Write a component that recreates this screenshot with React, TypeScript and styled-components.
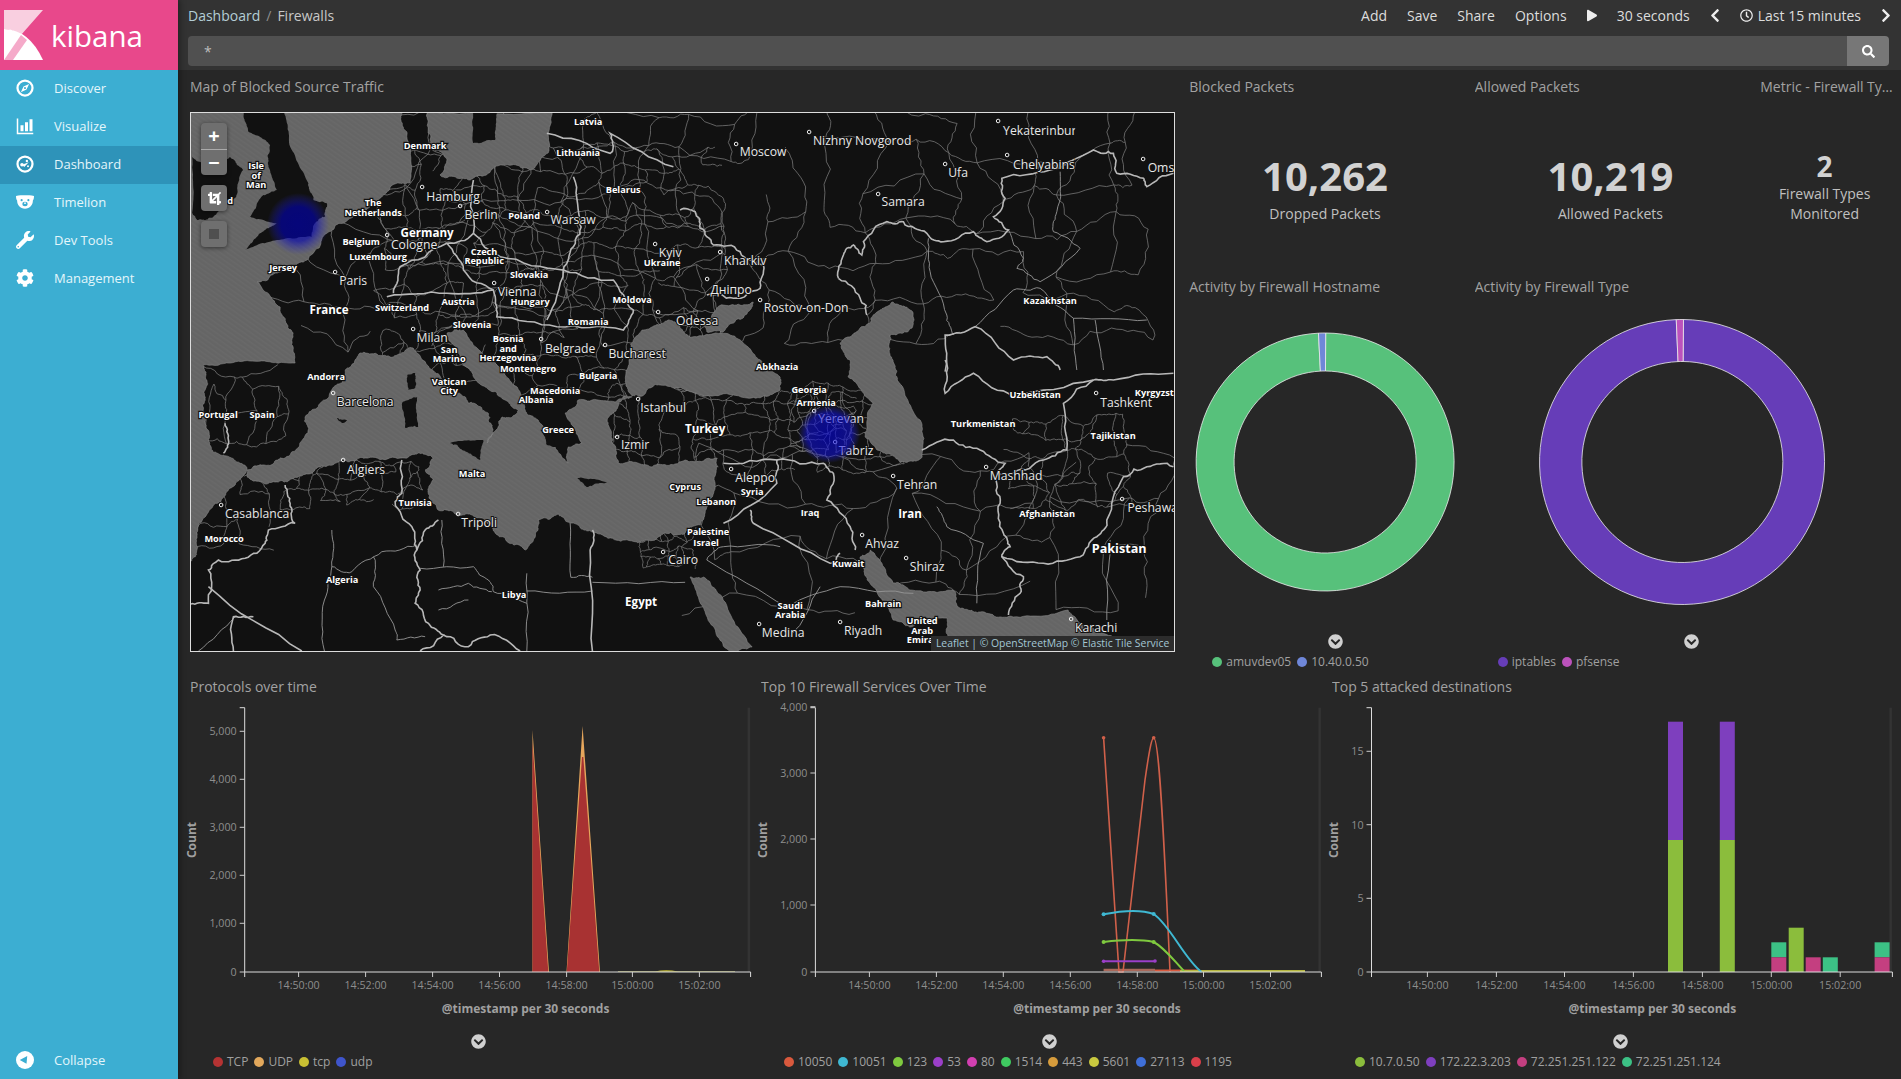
import React from "react";
import styled, { createGlobalStyle } from "styled-components";
import {
  FaChevronCircleDown,
  FaChevronLeft,
  FaChevronRight,
  FaCog,
  FaCrop,
  FaPlay,
  FaRegClock,
  FaSearch,
  FaWrench,
} from "react-icons/fa";

const GlobalStyle = createGlobalStyle`
  html, body {
    margin: 0;
    height: 100%;
    background: #272727;
    overflow: hidden;
  }
  body {
    font-family: "Open Sans", "Liberation Sans", sans-serif;
  }
`;

// layout
const Page = styled.div`
  display: flex;
  width: 1901px;
  height: 1079px;
  overflow: hidden;
`;

const Sidebar = styled.nav`
  display: flex;
  flex-direction: column;
  flex: 0 0 178px;
  background: #3caed2;
  box-shadow: 2px 0 6px rgba(0, 0, 0, 0.35);
  z-index: 2;
`;

const Logo = styled.div`
  display: flex;
  align-items: center;
  gap: 7px;
  height: 70px;
  padding-left: 4px;
  background: #e8488b;
  color: #fff;
  font-size: 29.5px;
  box-sizing: border-box;
`;

const NavItem = styled.div<{ $active?: boolean; $bottom?: boolean }>`
  display: flex;
  align-items: center;
  gap: 20px;
  height: 38px;
  padding: 0 0 ${(p) => (p.$bottom ? "0" : "2px")} 16px;
  box-sizing: border-box;
  margin-top: ${(p) => (p.$bottom ? "auto" : "0")};
  background: ${(p) => (p.$active ? "#2e93b9" : "transparent")};
  color: #e4f6fb;
  font-size: 13px;
  svg {
    flex: 0 0 18px;
    width: 18px;
    height: 18px;
    color: #fff;
  }
`;

const Main = styled.main`
  display: flex;
  flex-direction: column;
  flex: 1;
  min-width: 0;
`;

const TopBar = styled.header`
  display: flex;
  flex-direction: column;
  height: 70px;
  padding: 0 12px 0 10px;
  background: #333;
  box-sizing: border-box;
`;

const TopRow = styled.div`
  display: flex;
  align-items: center;
  justify-content: space-between;
  height: 32px;
  padding-bottom: 2px;
  box-sizing: border-box;
  margin-bottom: 4px;
  font-size: 14px;
  color: #ddd;
`;

const Crumbs = styled.div`
  display: flex;
  gap: 6px;
  color: #c8c8c8;
`;

const CrumbLink = styled.span`
  color: #b4ced6;
`;

const CrumbSep = styled.span`
  color: #8f8f8f;
`;

const Menu = styled.div`
  display: flex;
  align-items: center;
  gap: 20px;
  margin-right: -2px;
  svg {
    display: block;
    width: 10px;
    height: 15px;
    color: #eee;
  }
`;

const TimeRange = styled.span`
  display: flex;
  align-items: center;
  gap: 5px;
  svg {
    width: 13px;
    height: 13px;
  }
`;

const SearchBar = styled.form`
  display: flex;
  height: 30px;
  margin: 0;
`;

const SearchInput = styled.input`
  flex: 1;
  min-width: 0;
  padding: 0 0 0 16px;
  border: 0;
  border-radius: 4px 0 0 4px;
  background: #505050;
  color: #bdbdbd;
  font: 14px "Open Sans", sans-serif;
  outline: none;
`;

const SearchButton = styled.button`
  display: flex;
  align-items: center;
  justify-content: center;
  width: 42px;
  padding: 0;
  border: 0;
  border-radius: 0 4px 4px 0;
  background: #777;
  color: #fff;
  font-size: 13px;
`;

const Grid = styled.div`
  display: grid;
  flex: 1;
  grid-template-columns: repeat(12, 1fr);
  grid-template-rows: 200px 400px 1fr;
  padding: 0 2px 0 8px;
  min-height: 0;
`;

const Panel = styled.section<{ $col: string; $row: string }>`
  display: flex;
  flex-direction: column;
  grid-column: ${(p) => p.$col};
  grid-row: ${(p) => p.$row};
  min-width: 0;
  padding: 0 10px 0 4px;
`;

const PanelTitle = styled.h2`
  flex: 0 0 34px;
  margin: 0 -4px 0 0;
  color: #a2a2a2;
  font-size: 14px;
  font-weight: 400;
  line-height: 34px;
  white-space: nowrap;
  overflow: hidden;
  text-overflow: ellipsis;
`;

const Metric = styled.div`
  display: flex;
  flex: 1;
  flex-direction: column;
  justify-content: flex-end;
  align-items: center;
  padding-bottom: 46px;
  text-align: center;
`;

const MetricValue = styled.div<{ $small?: boolean }>`
  color: #d2d2d2;
  font-size: ${(p) => (p.$small ? "28px" : "40px")};
  font-weight: 700;
  line-height: ${(p) => (p.$small ? "36px" : "50px")};
  margin-bottom: ${(p) => (p.$small ? "0" : "3px")};
`;

const MetricLabel = styled.div`
  color: #c0c0c0;
  font-size: 14px;
  line-height: 20px;
`;

const ChartSvg = styled.svg`
  display: block;
  flex: 0 0 330px;
  height: 330px;
  overflow: visible;
`;

const ChevronRow = styled.div`
  display: flex;
  justify-content: center;
  height: 14px;
  padding-left: 20px;
  color: #d0d0d0;
  font-size: 15px;
  line-height: 14px;
`;

const Legend = styled.ul`
  display: flex;
  gap: 6px;
  margin: 5px 0 0;
  padding: 0 0 0 23px;
  list-style: none;
`;

const LegendItem = styled.li`
  display: flex;
  align-items: center;
  gap: 4px;
  color: #a0a0a0;
  font-size: 12px;
  line-height: 18px;
`;

const LegendDot = styled.span<{ $color: string }>`
  width: 10px;
  height: 10px;
  border-radius: 50%;
  background: ${(p) => p.$color};
`;

// map
const MapFrame = styled.div`
  position: relative;
  height: 540px;
  margin-top: 8px;
  border: 1px solid #ddd;
  box-sizing: border-box;
  overflow: hidden;
  background: #111;
`;

const MapSvg = styled.svg`
  display: block;
  width: 100%;
  height: 100%;
`;

const MapControls = styled.div`
  position: absolute;
  top: 10px;
  left: 10px;
  display: flex;
  flex-direction: column;
  gap: 10px;
`;

const ControlGroup = styled.div`
  display: flex;
  flex-direction: column;
  width: 26px;
  border-radius: 4px;
  background: #6f6f6f;
  box-shadow: 0 1px 4px rgba(0, 0, 0, 0.5);
  overflow: hidden;
`;

const ControlButton = styled.div<{ $divider?: boolean }>`
  display: flex;
  align-items: center;
  justify-content: center;
  height: 26px;
  box-sizing: border-box;
  color: #fff;
  font-size: 20px;
  font-weight: 700;
  line-height: 1;
  border-top: ${(p) => (p.$divider ? "1px solid #aaa" : "0")};
  svg {
    width: 13px;
    height: 13px;
  }
`;

const StopSquare = styled.span`
  width: 10px;
  height: 10px;
  background: #4f4f4f;
`;

const Attribution = styled.div`
  position: absolute;
  right: 0;
  bottom: 0;
  padding: 0 5px;
  background: #2c2c2c;
  color: #a3c7d4;
  font-size: 10.4px;
  line-height: 15px;
  white-space: nowrap;
`;

const CityLabel = styled.text`
  fill: #e8e8e8;
  font-size: 12.2px;
  text-anchor: middle;
  paint-order: stroke;
  stroke: #111;
  stroke-width: 2px;
`;

const CountryLabel = styled.text<{ $size?: number }>`
  fill: #fff;
  font-size: ${(p) => p.$size ?? 9.2}px;
  font-weight: 700;
  text-anchor: middle;
  paint-order: stroke;
  stroke: #111;
  stroke-width: 2.4px;
`;

const TickText = styled.text<{ $anchor: string }>`
  fill: #8e8e8e;
  font-size: 10.7px;
  text-anchor: ${(p) => p.$anchor};
`;

const AxisTitle = styled.text`
  fill: #a0a0a0;
  font-size: 12px;
  font-weight: 700;
  text-anchor: middle;
`;

// map data, written in the pixel coordinates of the page
type Pt = [number, number];

const P = (ox: number, oy: number, s: string): Pt[] =>
  s.split(" ").map((v) => {
    const [x, y] = v.split(",").map(Number);
    return [ox + x / 3, oy + y / 3] as Pt;
  });
const A = (s: string) => P(0, 0, s.split(" ").map((v) => v.split(",").map((n) => Number(n) * 3).join(",")).join(" "));

let seed = 7;
const rnd = () => {
  seed = (seed * 16807) % 2147483647;
  return seed / 2147483647;
};

const rough = (pts: Pt[], amp: number, closed = false, passes = 3) => {
  let cur = closed ? [...pts, pts[0]] : pts;
  for (let pass = 0; pass < passes; pass++) {
    const next: Pt[] = [cur[0]];
    for (let i = 1; i < cur.length; i++) {
      const [ax, ay] = cur[i - 1];
      const [bx, by] = cur[i];
      const len = Math.hypot(bx - ax, by - ay);
      const off = (rnd() - 0.5) * Math.min(amp, len * 0.35);
      next.push([(ax + bx) / 2 + ((by - ay) / (len || 1)) * off, (ay + by) / 2 - ((bx - ax) / (len || 1)) * off]);
      next.push(cur[i]);
    }
    cur = next;
    amp *= 0.6;
  }
  return "M" + cur.map(([x, y]) => `${x.toFixed(1)} ${y.toFixed(1)}`).join("L") + (closed ? "Z" : "");
};

const mesh = (x0: number, y0: number, x1: number, y1: number, step: number) => {
  const nodes: Pt[][] = [];
  for (let y = y0; y <= y1; y += step) {
    const row: Pt[] = [];
    for (let x = x0; x <= x1; x += step) row.push([x + (rnd() - 0.5) * step * 0.8, y + (rnd() - 0.5) * step * 0.8]);
    nodes.push(row);
  }
  let d = "";
  nodes.forEach((row, j) =>
    row.forEach((n, i) => {
      if (row[i + 1] && rnd() < 0.8) d += rough([n, row[i + 1]], step * 0.3);
      if (nodes[j + 1] && rnd() < 0.8) d += rough([n, nodes[j + 1][i]], step * 0.3);
    }),
  );
  return d;
};

const meshFine = [
  mesh(190, 112, 1175, 340, 38),
  mesh(380, 150, 720, 400, 20),
  mesh(610, 385, 900, 470, 17),
  mesh(280, 462, 430, 505, 14),
  mesh(200, 478, 285, 560, 22),
  mesh(700, 460, 1175, 640, 46),
  mesh(790, 395, 860, 450, 9),
  mesh(1010, 420, 1130, 505, 17),
  mesh(640, 530, 695, 570, 9),
  mesh(205, 370, 300, 450, 22),
].join("");

const seas = [
  A("190,112 402,112 407,133 410,183 397,183 377,200 343,223 327,233 307,260 277,273 257,282 280,307 293,333 295,363 250,361 203,365 206,372 205,390 203,410 206,425 208,440 213,452 223,455 247,468 245,474 235,485 218,503 205,517 197,537 195,557 190,562"),
  A("428,112 552,112 548,153 530,170 500,165 470,180 440,175 447,160 433,150 428,133"),
  A("247,470 262,465 285,458 298,448 308,433 305,417 325,400 342,383 345,370 360,353 390,357 413,348 432,370 452,390 468,403 488,413 493,430 487,443 498,427 502,417 515,415 518,410 505,400 485,387 472,373 460,355 447,333 463,330 490,360 517,387 525,410 538,420 555,447 568,463 568,447 582,443 565,413 578,400 615,402 632,397 618,403 607,420 612,443 618,463 652,467 685,460 717,458 716,470 710,500 700,525 685,533 665,533 645,540 625,540 592,532 572,523 558,514 538,520 535,537 525,550 505,538 495,533 482,518 462,515 438,510 428,493 433,480 425,470 433,458 418,453 405,458 365,458 342,460 318,467 298,477 275,482 247,477"),
  A("632,396 625,382 630,350 642,330 668,320 680,328 692,337 730,335 757,358 780,377 780,390 747,398 700,395 660,385 640,396"),
  A("705,322 723,305 753,302 743,318 723,332 707,332"),
  A("877,312 893,302 913,313 912,328 890,335 893,362 897,380 920,420 922,457 900,462 877,450 865,437 873,403 848,377 850,360 840,343 860,328"),
  A("690,577 703,577 723,600 752,647 730,652 710,623"),
  A("860,557 870,550 893,583 910,590 953,590 958,607 980,612 1013,617 1068,610 1077,620 1113,637 1020,640 950,640 947,618 910,627 893,620 867,580"),
];

const lands = [
  P(180, 100, "190,36 312,36 330,140 385,250 400,300 440,310 435,350 405,370 395,410 290,420 195,450 240,400 290,370 210,350 250,285 290,270 265,200 270,135 205,95"),
  A("192,157 213,167 230,157 243,170 236,197 213,217 197,220 192,213"),
  A("473,112 497,112 495,140 473,143"),
  A("450,443 483,440 480,460 462,450"),
  A("402,403 417,397 418,427 405,428"),
  A("407,375 415,373 415,388 408,390"),
  A("577,478 607,483 588,487"),
  A("337,418 347,420 342,423"),
  A("540,430 551,428 556,447 547,445"),
];

const majorBorders = [
  P(680, 105, "475,520 490,450 520,420 545,450 550,410 620,350 670,350 740,385 790,410 880,380 920,410 985,375 940,335 975,280 965,220 1110,195 1240,135 1300,145 1310,205 1390,220 1400,245 1480,205"),
  P(680, 105, "0,315 45,320 60,370 100,420 180,440 250,480 240,550 160,580 80,570"),
  P(680, 105, "475,520 540,580 560,630"),
  P(680, 105, "795,800 795,690 885,665 1000,765 1100,755 1140,795"),
  P(180, 100, "880,240 880,400 800,430 850,510 940,570 950,650 1130,680 1330,690 1360,630 1300,540 1150,510 1100,660"),
  P(180, 100, "1100,100 1290,160 1290,100 1480,200"),
  P(180, 100, "1180,230 1200,360 1180,440 1150,510 960,470 880,400"),
  P(180, 100, "620,590 800,580 940,570"),
  P(180, 100, "640,580 660,500 800,430"),
  P(185, 370, "300,345 315,400 330,460 250,480 240,520 180,565 100,570 70,600 70,700 15,703"),
  P(185, 370, "70,650 350,843"),
  P(185, 370, "145,843 145,740 205,740"),
  P(185, 370, "650,270 650,370 630,395 680,470 695,540 705,600 705,660 690,700 730,760 775,795 705,843"),
  P(185, 370, "775,795 850,830 915,795 1005,843"),
  P(185, 370, "695,540 720,480 760,450"),
  P(185, 370, "1222,480 1215,540 1222,843"),
  P(185, 370, "120,160 130,210 115,250"),
  P(680, 360, "130,490 290,370 290,300 130,310"),
  P(680, 360, "290,300 430,310 460,340 440,420 510,500 525,570"),
  P(680, 360, "210,450 220,490 450,610 480,580"),
  P(680, 360, "725,270 820,240 900,270 975,310 950,350 960,430 970,520 990,560 965,590 1030,650 1020,700 985,765"),
  P(680, 360, "965,590 1090,610 1200,590 1250,530 1280,480 1330,350 1400,320 1480,320"),
  P(680, 360, "795,0 795,100 880,40 1000,110 1240,60 1300,60 1480,40"),
  P(680, 360, "1240,60 1150,130 1160,270 1090,300 1000,340 950,350"),
];

const minorBorders = [
  P(185, 370, "440,480 440,590 418,690 418,843"),
  P(185, 370, "440,590 500,605 590,545 695,525"),
  P(185, 370, "565,560 565,650 630,780 635,810 720,800"),
  P(185, 370, "705,595 865,590 910,630 925,665 1025,700"),
  P(185, 370, "770,450 775,590"),
  P(185, 370, "150,740 40,843"),
  P(185, 370, "1025,610 1025,843"),
  P(185, 370, "1025,663 1222,663"),
  P(185, 370, "1222,637 1500,637"),
  P(185, 370, "1155,460 1157,622 1222,622"),
  P(185, 370, "760,660 850,640 920,665"),
  P(185, 370, "760,720 850,690"),
  P(680, 105, "885,665 1000,555 1080,550 1180,640 1400,645"),
  P(680, 105, "1180,640 1190,795"),
  P(680, 105, "1245,645 1270,795"),
  P(680, 105, "745,400 750,500 800,630 820,690"),
  P(680, 105, "985,375 1030,460 1010,490 1080,530"),
  P(680, 105, "1140,200 1130,320 1120,380 1200,430 1080,530"),
  P(680, 360, "300,560 130,560 80,600 320,740 480,680 700,700"),
  P(680, 360, "420,680 330,830"),
  P(680, 360, "770,440 800,500 910,550 890,730"),
  P(680, 360, "1290,540 1280,780"),
];

const cities: [string, number, number, number, number][] = [
  ["Hamburg", 453, 197, 422, 187],
  ["Berlin", 481, 215, 460, 206],
  ["Warsaw", 573, 220, 547, 212],
  ["Cologne", 414, 245, 387, 235],
  ["Paris", 353, 281, 335, 272],
  ["Vienna", 517, 292, 494, 283],
  ["Milan", 432, 338, 413, 329],
  ["Belgrade", 570, 349, 541, 339],
  ["Bucharest", 637, 354, 605, 345],
  ["Kyiv", 670, 253, 655, 244],
  ["Odessa", 697, 321, 658, 312],
  ["Barcelona", 365, 402, 333, 393],
  ["Istanbul", 663, 408, 638, 399],
  ["Izmir", 635, 445, 617, 437],
  ["Algiers", 366, 470, 343, 460],
  ["Casablanca", 257, 514, 221, 505],
  ["Tripoli", 479, 523, 458, 514],
  ["Cairo", 683, 560, 663, 552],
  ["Yerevan", 841, 419, 814, 411],
  ["Tabriz", 856, 451, 835, 442],
  ["Aleppo", 755, 478, 731, 469],
  ["Tehran", 917, 485, 893, 476],
  ["Mashhad", 1016, 476, 986, 467],
  ["Tashkent", 1126, 403, 1096, 393],
  ["Peshawar", 1155, 508, 1122, 499],
  ["Ahvaz", 882, 544, 862, 535],
  ["Shiraz", 927, 567, 906, 558],
  ["Medina", 783, 633, 759, 624],
  ["Riyadh", 863, 631, 840, 622],
  ["Karachi", 1096, 628, 1071, 619],
  ["Moscow", 763, 152, 736, 144],
  ["Nizhny Novgorod", 862, 141, 809, 132],
  ["Ufa", 958, 173, 945, 164],
  ["Samara", 903, 202, 878, 194],
  ["Omsk", 1164, 168, 1143, 159],
  ["Kharkiv", 745, 261, 720, 252],
  ["Дніпро", 731, 290, 707, 279],
  ["Rostov-on-Don", 806, 308, 760, 300],
];

const clippedCities: [string, number, number, number, number][] = [
  ["Yekaterinburg", 1043, 131, 998, 121],
  ["Chelyabinsk", 1047, 165, 1007, 155],
];

const countries: [string, number, number, number?][] = [
  ["Isle", 256, 165], ["of", 256, 175], ["Man", 256, 184], ["d", 230, 200],
  ["The", 373, 202], ["Netherlands", 373, 212], ["Denmark", 425, 145], ["Latvia", 588, 121],
  ["Lithuania", 578, 152], ["Belarus", 623, 189], ["Poland", 524, 215], ["Germany", 427, 233, 11.6],
  ["Belgium", 361, 241], ["Luxembourg", 378, 256], ["Czech", 484, 251], ["Republic", 484, 260],
  ["Slovakia", 529, 274], ["Hungary", 530, 301], ["Austria", 458, 301], ["Switzerland", 402, 307],
  ["Jersey", 283, 267], ["France", 329, 310, 11.6], ["Slovenia", 472, 324], ["Romania", 588, 321],
  ["Moldova", 632, 299], ["Ukraine", 662, 262], ["Bosnia", 508, 338], ["and", 508, 348],
  ["Herzegovina", 508, 357], ["Montenegro", 528, 368], ["San", 449, 349], ["Marino", 449, 358],
  ["Andorra", 326, 376], ["Bulgaria", 598, 375], ["Vatican", 449, 381], ["City", 449, 390],
  ["Macedonia", 555, 390], ["Albania", 536, 399], ["Portugal", 218, 414], ["Spain", 262, 414],
  ["Greece", 558, 429], ["Malta", 472, 473], ["Tunisia", 415, 502], ["Morocco", 224, 538],
  ["Algeria", 342, 579], ["Libya", 514, 594], ["Egypt", 641, 602, 11.6], ["Cyprus", 685, 486],
  ["Abkhazia", 777, 366], ["Georgia", 809, 389], ["Armenia", 816, 402], ["Turkey", 705, 429, 11.6],
  ["Syria", 752, 491], ["Lebanon", 716, 501], ["Palestine", 708, 531], ["Israel", 706, 542],
  ["Iraq", 810, 512], ["Iran", 910, 514, 11.6], ["Kuwait", 848, 563], ["Bahrain", 883, 603],
  ["Saudi", 790, 605], ["Arabia", 790, 614], ["United", 922, 620], ["Arab", 922, 630],
  ["Emirates", 927, 639], ["Turkmenistan", 983, 423], ["Uzbekistan", 1035, 394],
  ["Kyrgyzstan", 1160, 392], ["Tajikistan", 1113, 435], ["Afghanistan", 1047, 513],
  ["Pakistan", 1119, 549, 12.6], ["Kazakhstan", 1050, 300],
];

const seaPaths = seas.map((s) => rough(s, 6, true, 4));
const landPaths = lands.map((s) => rough(s, 3.5, true, 4));
const majorPaths = majorBorders.map((s) => rough(s, 7));
const minorPaths = minorBorders.map((s) => rough(s, 5));

const CityMark = ({ city }: { city: [string, number, number, number, number] }) => (
  <>
    <circle cx={city[3]} cy={city[4]} r={1.8} fill="none" stroke="#eee" strokeWidth={1} />
    <CityLabel x={city[1]} y={city[2] + 4}>
      {city[0]}
    </CityLabel>
  </>
);

const WorldMap = () => (
  <MapSvg viewBox="191 113 983 538">
    <defs>
      <pattern id="seaTex" width="4" height="4" patternUnits="userSpaceOnUse" patternTransform="rotate(35)">
        <rect width="4" height="4" fill="#656565" />
        <rect width="4" height="1.5" fill="#696969" />
      </pattern>
      <radialGradient id="blobUk">
        <stop offset="0" stopColor="#0000b0" stopOpacity="0.66" />
        <stop offset="0.55" stopColor="#0000b8" stopOpacity="0.6" />
        <stop offset="1" stopColor="#2a2ad8" stopOpacity="0" />
      </radialGradient>
      <radialGradient id="blobAm">
        <stop offset="0" stopColor="#0000d8" stopOpacity="0.62" />
        <stop offset="0.72" stopColor="#1010e0" stopOpacity="0.55" />
        <stop offset="1" stopColor="#2a2ad8" stopOpacity="0" />
      </radialGradient>
      <clipPath id="tileEdge">
        <rect x="190" y="112" width="885" height="100" />
      </clipPath>
    </defs>
    <rect x="190" y="112" width="985" height="540" fill="#111" />
    <path d={meshFine} fill="none" stroke="#7c7c7c" strokeWidth={0.75} />
    {seaPaths.map((d, i) => (
      <path key={i} d={d} fill="url(#seaTex)" stroke="#8a8a8a" strokeWidth={0.6} />
    ))}
    {landPaths.map((d, i) => (
      <path key={i} d={d} fill="#111" />
    ))}
    {minorPaths.map((d, i) => (
      <path key={i} d={d} fill="none" stroke="#969696" strokeWidth={0.9} />
    ))}
    {majorPaths.map((d, i) => (
      <path key={i} d={d} fill="none" stroke="#b8b8b8" strokeWidth={1.6} />
    ))}
    {countries.map(([name, x, y, size]) => (
      <CountryLabel key={name} x={x} y={y + 3.5} $size={size}>
        {name}
      </CountryLabel>
    ))}
    {cities.map((c) => (
      <CityMark key={c[0]} city={c} />
    ))}
    <g clipPath="url(#tileEdge)">
      {clippedCities.map((c) => (
        <CityMark key={c[0]} city={c} />
      ))}
    </g>
    <circle cx={298} cy={224} r={31} fill="url(#blobUk)" />
    <ellipse cx={829} cy={434} rx={31} ry={29} fill="url(#blobAm)" />
  </MapSvg>
);

// chart pieces
type AxisProps = {
  x0: number;
  x1: number;
  countX: number;
  titleX: number;
  yTicks: [string, number][];
  xTicks: number[];
  originX: number;
  children: React.ReactNode;
};

const times = ["14:50:00", "14:52:00", "14:54:00", "14:56:00", "14:58:00", "15:00:00", "15:02:00"];
const TOP = 707.7;
const BASE = 972;

const AxisChart = ({ x0, x1, countX, titleX, yTicks, xTicks, originX, children }: AxisProps) => (
  <ChartSvg viewBox={`${originX} 704 561 330`} width={561}>
    <rect x={x1 - 3} y={TOP} width={2.5} height={BASE - TOP} fill="#333" />
    {children}
    <path d={`M${x0 - 5} ${TOP}H${x0}V${BASE}H${x1}V${BASE + 5}M${x0} ${BASE}V${BASE + 5}`} fill="none" stroke="#ddd" />
    {yTicks.map(([label, y]) => (
      <g key={label}>
        <line x1={x0 - 5} x2={x0} y1={y} y2={y} stroke="#ccc" />
        <TickText x={x0 - 8} y={y + 4} $anchor="end">
          {label}
        </TickText>
      </g>
    ))}
    {xTicks.map((x, i) => (
      <g key={x}>
        <line x1={x} x2={x} y1={BASE} y2={BASE + 5} stroke="#ccc" />
        <TickText x={x} y={BASE + 17} $anchor="middle">
          {times[i]}
        </TickText>
      </g>
    ))}
    <AxisTitle transform={`translate(${countX + 4} 840) rotate(-90)`}>Count</AxisTitle>
    <AxisTitle x={titleX} y={1013}>
      @timestamp per 30 seconds
    </AxisTitle>
  </ChartSvg>
);

const arc = (cx: number, cy: number, R: number, r: number, a0: number, a1: number) => {
  const pt = (rad: number, a: number) => {
    const t = ((a - 90) * Math.PI) / 180;
    return `${(cx + rad * Math.cos(t)).toFixed(2)} ${(cy + rad * Math.sin(t)).toFixed(2)}`;
  };
  const large = a1 - a0 > 180 ? 1 : 0;
  return `M${pt(R, a0)}A${R} ${R} 0 ${large} 1 ${pt(R, a1)}L${pt(r, a1)}A${r} ${r} 0 ${large} 0 ${pt(r, a0)}Z`;
};

const Donut = ({ origin, width, cx, R, r, main, slice, from, to }: {
  origin: number; width: number; cx: number; R: number; r: number; main: string; slice: string; from: number; to: number;
}) => (
  <ChartSvg viewBox={`${origin} 304 ${width} 330`} width={width}>
    <path d={arc(cx, 462, R, r, to, 360 + from)} fill={main} stroke="#eee" strokeWidth={0.8} />
    <path d={arc(cx, 462, R, r, from, to)} fill={slice} stroke="#eee" strokeWidth={0.8} />
  </ChartSvg>
);

const LegendRow = ({ items }: { items: [string, string][] }) => (
  <Legend>
    {items.map(([name, color]) => (
      <LegendItem key={name}>
        <LegendDot $color={color} />
        {name}
      </LegendItem>
    ))}
  </Legend>
);

const Chevron = () => (
  <ChevronRow>
    <FaChevronCircleDown />
  </ChevronRow>
);

// sidebar icons
const CompassIcon = () => (
  <svg viewBox="0 0 24 24">
    <circle cx="12" cy="12" r="10" fill="none" stroke="currentColor" strokeWidth="3" />
    <path d="M17.5 6.5 14 14l-7.500 3.500L10 10zM12 10.600a1.400 1.400 0 1 0 .01 0z" fill="currentColor" fillRule="evenodd" />
  </svg>
);

const BarsIcon = () => (
  <svg viewBox="0 0 24 24">
    <path d="M1 2h2v19h20v2H1z M6 11h4v8H6z M12 7h4v12h-4z M18 3h4v16h-4z" fill="currentColor" />
  </svg>
);

const GaugeIcon = () => (
  <svg viewBox="0 0 24 24">
    <circle cx="12" cy="12" r="10" fill="none" stroke="currentColor" strokeWidth="3" />
    <circle cx="8" cy="13" r="2.400" fill="currentColor" />
    <circle cx="14.500" cy="8" r="1.600" fill="currentColor" />
    <path d="M8 13 17 9.500 11 16z" fill="currentColor" />
    <circle cx="16" cy="15" r="1.300" fill="currentColor" />
  </svg>
);

const BearIcon = () => (
  <svg viewBox="0 0 24 24">
    <path d="M0 4c4-1 8-1 12-1s8 0 12 1c0 3-.5 5-1.500 6 0 6-4 11-10.500 11S1.500 16 1.500 10C.5 9 0 7 0 4z" fill="currentColor" />
    <circle cx="7.500" cy="9.500" r="1.400" fill="#3caed2" />
    <circle cx="16.500" cy="9.500" r="1.400" fill="#3caed2" />
    <ellipse cx="12" cy="14.500" rx="3.500" ry="3" fill="#3caed2" />
    <circle cx="12" cy="13.500" r="1.200" fill="#fff" />
  </svg>
);

const CollapseIcon = () => (
  <svg viewBox="0 0 24 24">
    <circle cx="12" cy="12" r="12" fill="currentColor" />
    <path d="M5 12 15 6.500 14 17z" fill="#3caed2" />
  </svg>
);

const KibanaMark = () => (
  <svg width="40" height="50" viewBox="0 0 40 50">
    <path d="M0 0h39L17 25Q9 19.500 0 19z" fill="#f9cfe0" />
    <path d="M0 19Q25 19.500 39 50H0z" fill="#fff" />
    <path d="M0 50 17 25 23 30 9 50z" fill="#f5aac9" />
  </svg>
);

export default function App() {
  return (
    <Page>
      <GlobalStyle />
      <Sidebar>
        <Logo>
          <KibanaMark />
          kibana
        </Logo>
        <NavItem><CompassIcon />Discover</NavItem>
        <NavItem><BarsIcon />Visualize</NavItem>
        <NavItem $active><GaugeIcon />Dashboard</NavItem>
        <NavItem><BearIcon />Timelion</NavItem>
        <NavItem><FaWrench />Dev Tools</NavItem>
        <NavItem><FaCog />Management</NavItem>
        <NavItem $bottom><CollapseIcon />Collapse</NavItem>
      </Sidebar>
      <Main>
        <TopBar>
          <TopRow>
            <Crumbs>
              <CrumbLink>Dashboard</CrumbLink>
              <CrumbSep>/</CrumbSep>
              <span>Firewalls</span>
            </Crumbs>
            <Menu>
              <span>Add</span>
              <span>Save</span>
              <span>Share</span>
              <span>Options</span>
              <FaPlay />
              <span>30 seconds</span>
              <FaChevronLeft />
              <TimeRange>
                <FaRegClock />
                Last 15 minutes
              </TimeRange>
              <FaChevronRight />
            </Menu>
          </TopRow>
          <SearchBar>
            <SearchInput readOnly value="*" />
            <SearchButton type="button">
              <FaSearch />
            </SearchButton>
          </SearchBar>
        </TopBar>
        <Grid>
          <Panel $col="1 / span 7" $row="1 / span 2">
            <PanelTitle>Map of Blocked Source Traffic</PanelTitle>
            <MapFrame>
              <WorldMap />
              <MapControls>
                <ControlGroup>
                  <ControlButton>+</ControlButton>
                  <ControlButton $divider>−</ControlButton>
                </ControlGroup>
                <ControlGroup>
                  <ControlButton><FaCrop /></ControlButton>
                </ControlGroup>
                <ControlGroup>
                  <ControlButton><StopSquare /></ControlButton>
                </ControlGroup>
              </MapControls>
              <Attribution>Leaflet | © OpenStreetMap © Elastic Tile Service</Attribution>
            </MapFrame>
          </Panel>

          <Panel $col="8 / span 2" $row="1">
            <PanelTitle>Blocked Packets</PanelTitle>
            <Metric>
              <MetricValue>10,262</MetricValue>
              <MetricLabel>Dropped Packets</MetricLabel>
            </Metric>
          </Panel>
          <Panel $col="10 / span 2" $row="1">
            <PanelTitle>Allowed Packets</PanelTitle>
            <Metric>
              <MetricValue>10,219</MetricValue>
              <MetricLabel>Allowed Packets</MetricLabel>
            </Metric>
          </Panel>
          <Panel $col="12 / span 1" $row="1">
            <PanelTitle>Metric - Firewall Types</PanelTitle>
            <Metric>
              <MetricValue $small>2</MetricValue>
              <MetricLabel>Firewall Types<br />Monitored</MetricLabel>
            </Metric>
          </Panel>

          <Panel $col="8 / span 2" $row="2">
            <PanelTitle>Activity by Firewall Hostname</PanelTitle>
            <Donut origin={1189} width={272} cx={1325} R={129} r={91} main="#57c17b" slice="#6f87d8" from={-2.9} to={0.3} />
            <Chevron />
            <LegendRow items={[["amuvdev05", "#57c17b"], ["10.40.0.50", "#6f87d8"]]} />
          </Panel>
          <Panel $col="10 / span 3" $row="2">
            <PanelTitle>Activity by Firewall Type</PanelTitle>
            <Donut origin={1474.75} width={414} cx={1682} R={142.5} r={100.5} main="#663db8" slice="#bc52bc" from={-2.4} to={0.5} />
            <Chevron />
            <LegendRow items={[["iptables", "#663db8"], ["pfsense", "#bc52bc"]]} />
          </Panel>

          <Panel $col="1 / span 4" $row="3">
            <PanelTitle>Protocols over time</PanelTitle>
            <AxisChart
              originX={190}
              x0={244.7}
              x1={750.6}
              countX={192}
              titleX={525.6}
              yTicks={[["5,000", 731.3], ["4,000", 779.3], ["3,000", 827.3], ["2,000", 875.3], ["1,000", 923.3], ["0", 972]]}
              xTicks={[298.6, 365.6, 432.6, 499.5, 566.6, 632.4, 699.4]}
            >
              <path d="M532.500 972V730L549 972Z M566.500 972L582.600 726 600 972Z" fill="#e5a65c" />
              <path d="M532.500 972V742L548.300 972Z M566.800 972 582 757H583.300L599.300 972Z" fill="#a83232" />
              <path d="M618 971.500H735" stroke="#8d8d55" strokeWidth={1} />
              <path d="M655 971.500Q666 969 678 971.500Z" fill="#c9c033" />
            </AxisChart>
            <Chevron />
            <LegendRow items={[["TCP", "#b53333"], ["UDP", "#e2a85c"], ["tcp", "#c9c033"], ["udp", "#3f55cc"]]} />
          </Panel>

          <Panel $col="5 / span 4" $row="3">
            <PanelTitle>Top 10 Firewall Services Over Time</PanelTitle>
            <AxisChart
              originX={761}
              x0={815.4}
              x1={1321.4}
              countX={762.6}
              titleX={1097}
              yTicks={[["4,000", 706.7], ["3,000", 773], ["2,000", 839], ["1,000", 905], ["0", 972]]}
              xTicks={[869.4, 936.4, 1003.3, 1070.3, 1137.3, 1203.5, 1270.5]}
            >
              <path d="M1103.600 970H1155" stroke="#a8685a" strokeWidth={2.5} />
              <path d="M1155 970.500H1200" stroke="#d9593d" strokeWidth={2} />
              <path d="M1180 971H1305" stroke="#b4b53f" strokeWidth={2} />
              <path d="M1103.600 737.700 1119 972H1123L1145 780C1150 745 1152 738 1153.700 738C1158 738 1162 790 1170 972" fill="none" stroke="#d0604a" strokeWidth={1.6} />
              <path d="M1103.600 914.300C1120 911 1140 909 1153.700 914C1170 925 1185 960 1201.600 972" fill="none" stroke="#3fb8d2" strokeWidth={2} />
              <path d="M1103.600 942C1120 940 1140 939 1153.700 942C1165 948 1175 962 1184 971" fill="none" stroke="#7fc93f" strokeWidth={2} />
              <path d="M1103 961.300H1155" stroke="#9b3fc9" strokeWidth={2} />
              <circle cx={1103.6} cy={737.7} r={1.8} fill="#d0604a" />
              <circle cx={1153.7} cy={737.7} r={1.8} fill="#d0604a" />
              <circle cx={1103.6} cy={914.3} r={2} fill="#3fb8d2" />
              <circle cx={1153.7} cy={914} r={2} fill="#3fb8d2" />
              <circle cx={1103.6} cy={942} r={2} fill="#7fc93f" />
              <circle cx={1153.7} cy={942} r={2} fill="#7fc93f" />
              <circle cx={1103.6} cy={961.3} r={1.8} fill="#9b3fc9" />
              <circle cx={1155} cy={961} r={1.8} fill="#9b3fc9" />
            </AxisChart>
            <Chevron />
            <LegendRow
              items={[
                ["10050", "#d9593d"], ["10051", "#3fb8d2"], ["123", "#7fc93f"], ["53", "#9b3fc9"], ["80", "#d23fb0"],
                ["1514", "#3fca60"], ["443", "#d79c3c"], ["5601", "#c9c93f"], ["27113", "#3f6fd8"], ["1195", "#d93f4a"],
              ]}
            />
          </Panel>

          <Panel $col="9 / span 4" $row="3">
            <PanelTitle>Top 5 attacked destinations</PanelTitle>
            <AxisChart
              originX={1332}
              x0={1371.5}
              x1={1892.4}
              countX={1333.7}
              titleX={1652.3}
              yTicks={[["15", 751.3], ["10", 824.7], ["5", 898.3], ["0", 972]]}
              xTicks={[1427.4, 1496.4, 1564.5, 1633.4, 1702.4, 1771.3, 1840.2]}
            >
              <rect x={1668} y={721.7} width={15} height={118.3} fill="#7e3fbe" />
              <rect x={1668} y={840} width={15} height={132} fill="#8bbd3c" />
              <rect x={1719.8} y={721.7} width={15} height={118.3} fill="#7e3fbe" />
              <rect x={1719.8} y={840} width={15} height={132} fill="#8bbd3c" />
              <rect x={1771.3} y={942.3} width={15} height={15} fill="#3cc185" />
              <rect x={1771.3} y={957.3} width={15} height={14.7} fill="#c43f80" />
              <rect x={1788.7} y={927.7} width={15} height={44.3} fill="#8bbd3c" />
              <rect x={1805.7} y={957.3} width={15} height={14.7} fill="#c43f80" />
              <rect x={1822.8} y={957.3} width={15} height={14.7} fill="#3cc185" />
              <rect x={1874.6} y={942.3} width={15} height={15} fill="#3cc185" />
              <rect x={1874.6} y={957.3} width={15} height={14.7} fill="#c43f80" />
            </AxisChart>
            <Chevron />
            <LegendRow
              items={[["10.7.0.50", "#8bbd3c"], ["172.22.3.203", "#7e3fbe"], ["72.251.251.122", "#c43f80"], ["72.251.251.124", "#3cc185"]]}
            />
          </Panel>
        </Grid>
      </Main>
    </Page>
  );
}
